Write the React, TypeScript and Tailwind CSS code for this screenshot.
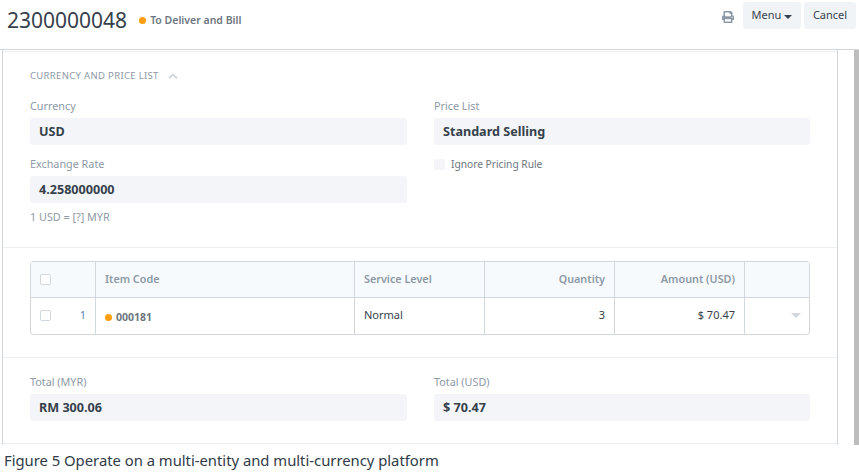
import React from 'react';
import { FaPrint } from 'react-icons/fa';

const Field = ({ label, value }: { label: string; value: string }) => (
  <div>
    <div className="h-[24px] pt-[4px] text-[10.8px] leading-[16px] text-[#8d99a6]">{label}</div>
    <div className="flex h-[27px] items-center rounded-[3px] bg-[#f4f5f9] pl-[9px] pt-[2px] text-[12.6px] font-bold text-[#36414c]">
      {value}
    </div>
  </div>
);

const Dot = ({ size }: { size: string }) => <span className={`inline-block rounded-full bg-[#ff9f0f] ${size}`} />;

const CheckBox = () => <span className="block h-[11px] w-[11px] rounded-[2px] border border-[#d1d8dd] bg-white" />;

const HeaderCell = ({ children, right }: { children?: React.ReactNode; right?: boolean }) => (
  <div className={`flex items-center border-r border-[#d1d8dd] px-[9px] text-[10.8px] font-semibold text-[#8d99a6] last:border-r-0 ${right ? 'justify-end' : ''}`}>
    {children}
  </div>
);

const RowCell = ({ children, right }: { children?: React.ReactNode; right?: boolean }) => (
  <div className={`flex items-center border-r border-[#d1d8dd] px-[9px] pb-[2px] text-[11px] text-[#36414c] last:border-r-0 ${right ? 'justify-end' : ''}`}>
    {children}
  </div>
);

const COLS = 'grid grid-cols-[65px_259px_130px_130px_130px_1fr]';

export default function App() {
  return (
    <div className="flex h-[476px] w-[859px] flex-col overflow-hidden bg-white font-['Noto_Sans',sans-serif]">
      {/* page head */}
      <div className="flex h-[50px] shrink-0 items-start border-b border-[#d1d8dd] pl-[7px] pr-[3px]">
        <div className="pt-[6px] text-[21px] leading-[29px] text-[#36414c]">2300000048</div>
        <div className="ml-[12px] flex items-center pt-[14px]">
          <Dot size="h-[7px] w-[7px]" />
          <span className="ml-[4px] text-[10.5px] font-semibold leading-[12px] text-[#6c7680]">To Deliver and Bill</span>
        </div>
        <div className="ml-auto flex items-start pt-[2px]">
          <FaPrint className="mr-[9px] mt-[9px] text-[12px] text-[#8d99a6]" />
          <button className="flex h-[27px] w-[58px] items-center justify-center rounded-[3px] bg-[#f0f4f7] text-[11px] text-[#36414c]">
            Menu
            <span className="ml-[3px] mt-[2px] h-0 w-0 border-x-[4px] border-t-[4px] border-x-transparent border-t-[#36414c]" />
          </button>
          <button className="ml-[3px] h-[27px] w-[52px] rounded-[3px] bg-[#f0f4f7] text-[11px] text-[#36414c]">Cancel</button>
        </div>
      </div>

      {/* form + scrollbar */}
      <div className="flex h-[395px] shrink-0 pl-[2px]">
        <div className="w-[836px] border-x border-[#d1d8dd]">
          <div className="mt-[1px] h-[1px] bg-[#ebeff2]" />

          <div className="h-[196px] border-b border-[#ebeff2] pl-[27px] pr-[26px] pt-[18px]">
            <div className="flex h-[12px] items-center text-[9.5px] tracking-[0.33px] text-[#8d99a6]">
              CURRENCY AND PRICE LIST
              <svg className="ml-[9px]" width="10" height="6" viewBox="0 0 10 6">
                <path d="M1 5.2 L5 1.6 L9 5.2" fill="none" stroke="#d1d8dd" strokeWidth="2" />
              </svg>
            </div>
            <div className="mt-[12px] grid grid-cols-[377px_376px] gap-x-[27px]">
              <div>
                <Field label="Currency" value="USD" />
                <div className="mt-[7px]">
                  <Field label="Exchange Rate" value="4.258000000" />
                </div>
                <div className="mt-[6px] text-[10.8px] leading-[16px] text-[#8d99a6]">1 USD = [?] MYR</div>
              </div>
              <div>
                <Field label="Price List" value="Standard Selling" />
                <div className="mt-[12px] flex items-center">
                  <span className="h-[11px] w-[11px] rounded-[2px] bg-[#f4f5f9]" />
                  <span className="ml-[6px] text-[10.2px] leading-[14px] text-[#6c7680]">Ignore Pricing Rule</span>
                </div>
              </div>
            </div>
          </div>

          <div className="h-[110px] border-b border-[#ebeff2] pl-[27px] pr-[26px] pt-[13px]">
            <div className="w-[780px] rounded-[3px] border border-[#d1d8dd]">
              <div className={`${COLS} h-[36px] border-b border-[#d1d8dd] bg-[#f7fafc]`}>
                <HeaderCell><CheckBox /></HeaderCell>
                <HeaderCell>Item Code</HeaderCell>
                <HeaderCell>Service Level</HeaderCell>
                <HeaderCell right>Quantity</HeaderCell>
                <HeaderCell right>Amount (USD)</HeaderCell>
                <HeaderCell />
              </div>
              <div className={`${COLS} h-[36px]`}>
                <RowCell>
                  <CheckBox />
                  <span className="ml-auto text-[#5e8ab8]">1</span>
                </RowCell>
                <RowCell>
                  <span className="mt-[5px] flex items-center">
                    <Dot size="h-[7px] w-[7px]" />
                    <span className="ml-[4px] text-[10.5px] font-bold text-[#6c7680]">000181</span>
                  </span>
                </RowCell>
                <RowCell>Normal</RowCell>
                <RowCell right>3</RowCell>
                <RowCell right>$ 70.47</RowCell>
                <RowCell right>
                  <span className="mr-[-1px] mt-[1px] h-0 w-0 border-x-[5px] border-t-[5px] border-x-transparent border-t-[#d1d8dd]" />
                </RowCell>
              </div>
            </div>
          </div>

          <div className="h-[86px] border-b border-[#ebeff2] pl-[27px] pr-[26px] pt-[12px]">
            <div className="grid grid-cols-[377px_376px] gap-x-[27px]">
              <Field label="Total (MYR)" value="RM 300.06" />
              <Field label="Total (USD)" value="$ 70.47" />
            </div>
          </div>
        </div>
        <div className="ml-auto w-[5px] bg-[#bdbdbd]" />
      </div>

      {/* caption */}
      <div className="pl-[4px] pt-[5px] text-[14.8px] leading-[20px] text-[#2f3b46]">
        Figure 5 Operate on a multi-entity and multi-currency platform
      </div>
    </div>
  );
}
